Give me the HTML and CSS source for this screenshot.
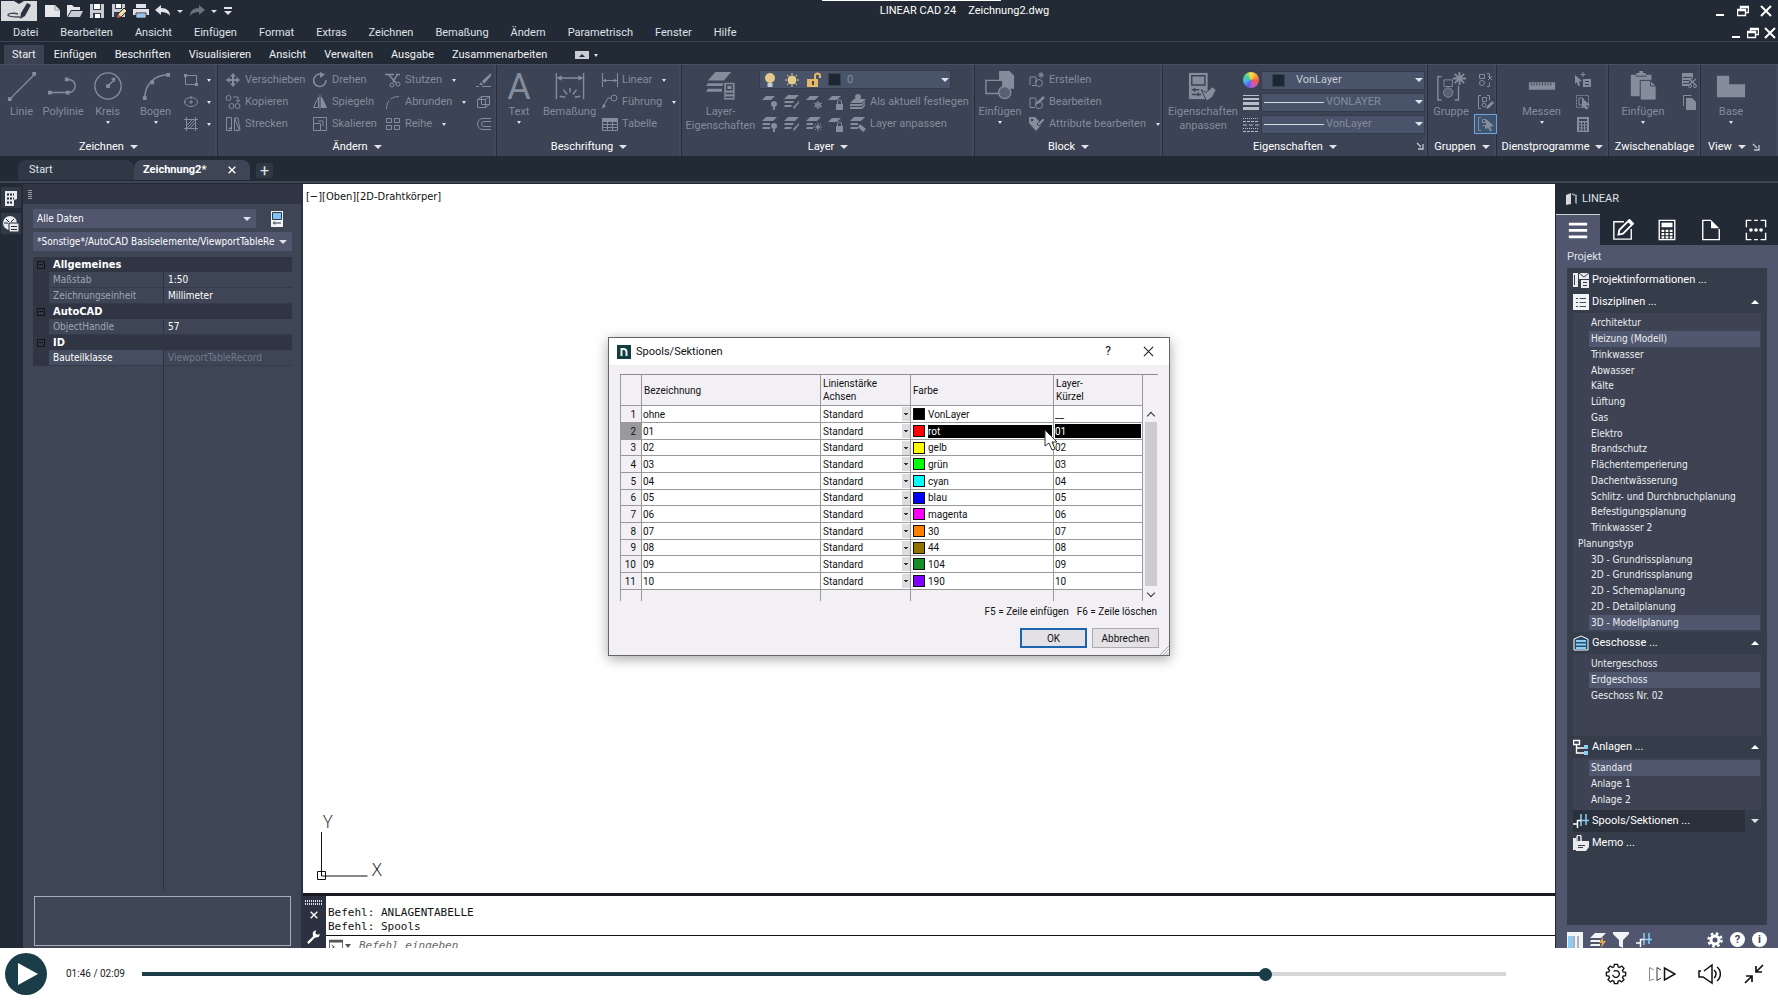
FILE: index.html
```
<!DOCTYPE html>
<html lang="de">
  <head>
    <meta charset="utf-8">
    <title>LINEAR CAD 24 - Zeichnung2.dwg</title>
    <link rel="stylesheet" href="styles.css">
  </head>
  <body>

    <!-- icon set -->
    <svg class="defs" aria-hidden="true">
      <symbol id="restore" viewBox="0 0 12 12"><path d="M3.500 4V1.500h8v6H9M.5 4.500h8v6h-8zM.5 5.500h8M4 2.500h7" fill="none" stroke="currentColor" stroke-width="1.400"/></symbol>
      <symbol id="close" viewBox="0 0 12 12"><path d="M1 1l10 10M11 1L1 11" fill="none" stroke="currentColor" stroke-width="2"/></symbol>
      <symbol id="min" viewBox="0 0 12 12"><path d="M2 9h8v2H2z" fill="currentColor"/></symbol>

      <symbol id="new" viewBox="0 0 16 16"><path d="M0 2h10l5 5v7H0z" fill="#e4e6ea"/><path d="M10 2v5h5" fill="none" stroke="#9298a4"/></symbol>
      <symbol id="open" viewBox="0 0 16 16"><path d="M0 14V2h5l2 2h6v3H4z" fill="#e4e6ea"/><path d="M4.500 8H16l-3 6H1z" fill="#c9ccd4"/></symbol>
      <symbol id="save" viewBox="0 0 16 16"><path d="M1 1h14v14H1z" fill="#c9ccd4"/><path d="M4 1h8v6H4zM4 10h8v5H4z" fill="#343b49"/><path d="M5 1h6v5H5zM6 11h5v4H6z" fill="#fff"/></symbol>
      <symbol id="saveas" viewBox="0 0 16 16"><path d="M1 1h13v13H1z" fill="#c9ccd4"/><path d="M4 1h7v5H4zM3 9h8v5H3z" fill="#343b49"/><path d="M5 1h5v4H5z" fill="#fff"/><path d="M6 15l1-4 6-6 3 3-6 6z" fill="#f1d9a8" stroke="#222a35"/><path d="M6 15l1-4 3 3z" fill="#d8584a"/></symbol>
      <symbol id="print" viewBox="0 0 16 16"><path d="M3 1h10v4H3zM0 6h16v6H0z" fill="#dfe1e6"/><path d="M3 5h10v1H3z" fill="#222a35"/><path d="M3 10h10v5H3z" fill="#fff" stroke="#222a35"/><path d="M4 11h8v3H4z" fill="#8fc6f2"/></symbol>
      <symbol id="undo" viewBox="0 0 16 16"><path d="M0 7l6-5v3c6 0 9 3 9 8-2-3-5-4-9-4v3z" fill="currentColor"/></symbol>
      <symbol id="redo" viewBox="0 0 16 16"><path d="M16 7l-6-5v3C4 5 1 8 1 13c2-3 5-4 9-4v3z" fill="currentColor"/></symbol>
      <symbol id="qmenu" viewBox="0 0 10 10"><path d="M1 1h8v2H1zM1 5h8L5 9z" fill="currentColor"/></symbol>

      <symbol id="line" viewBox="0 0 32 32"><path d="M3 30L29 4" stroke="currentColor" fill="none" stroke-width="1.500"/><path d="M1 28h4v4H1zM27 1h4v4h-4z" fill="currentColor"/></symbol>
      <symbol id="poly" viewBox="0 0 32 32"><path d="M2 23h18M20 9h2a7 7 0 010 14h-2" stroke="currentColor" fill="none" stroke-width="1.500"/><path d="M0 21h4v4H0zM18 7h4v4h-4zM19 21h4v4h-4z" fill="currentColor"/></symbol>
      <symbol id="circle" viewBox="0 0 32 32"><circle cx="16" cy="16" r="14" fill="none" stroke="currentColor" stroke-width="1.500"/><path d="M16 16l7-7" stroke="currentColor" stroke-width="1.500"/><path d="M14 14h4v4h-4zM24 7l-1 5-4-4z" fill="currentColor"/></symbol>
      <symbol id="arc" viewBox="0 0 32 32"><path d="M4 29C4 15 14 4 29 4" stroke="currentColor" fill="none" stroke-width="1.500"/><path d="M2 27h4v4H2zM10 10h4v4h-4zM27 2h4v4h-4z" fill="currentColor"/></symbol>
      <symbol id="rect" viewBox="0 0 16 16"><path d="M2.500 3.500h11v9h-11z" fill="none" stroke="currentColor"/><path d="M1 2h3v3H1zM12 11h3v3h-3z" fill="currentColor"/></symbol>
      <symbol id="ellipse" viewBox="0 0 16 16"><ellipse cx="8" cy="8" rx="6.500" ry="4.500" fill="none" stroke="currentColor"/><path d="M6 8h4M8 6v4M8 2v3M1 8h2" stroke="currentColor" fill="none"/></symbol>
      <symbol id="hatch" viewBox="0 0 16 16"><path d="M3.500 1v14M12.500 1v14M1 3.500h14M1 12.500h14M4 9l5-5M4 12l8-8M7 12l5-5" fill="none" stroke="currentColor"/></symbol>
      <symbol id="move" viewBox="0 0 16 16"><path d="M8 1l3 3.500H9V7h2.500V5L15 8l-3.500 3V9H9v2.500h2L8 15l-3-3.500h2V9H4.500v2L1 8l3.500-3v2H7V4.500H5z" fill="currentColor"/></symbol>
      <symbol id="rotate" viewBox="0 0 16 16"><path d="M10 2.500A6.200 6.200 0 1 0 14 8" fill="none" stroke="currentColor" stroke-width="1.500"/><path d="M8 0l5 2.500L8 6z" fill="currentColor"/></symbol>
      <symbol id="trim" viewBox="0 0 16 16"><path d="M0 2.500h9M11 2.500h4M4 3l7 8M12 3L8 10" fill="none" stroke="currentColor" stroke-width="1.500"/><circle cx="7" cy="13" r="2" fill="none" stroke="currentColor"/><circle cx="13" cy="12" r="2" fill="none" stroke="currentColor"/></symbol>
      <symbol id="copy" viewBox="0 0 16 16"><g fill="none" stroke="currentColor"><circle cx="3.500" cy="4" r="2.500"/><circle cx="6.500" cy="12" r="2.500"/><circle cx="12.500" cy="12" r="2.500"/><path d="M8 3h5v5M11 6l2 2 2-2"/></g></symbol>
      <symbol id="mirror" viewBox="0 0 16 16"><path d="M6.500 3v10.500h-5zM9.500 3v10.500h5z" fill="none" stroke="currentColor"/><path d="M9.500 3v10.500h5zM7.500 1h1v14h-1z" fill="currentColor"/></symbol>
      <symbol id="fillet" viewBox="0 0 16 16"><path d="M1.500 15C1.500 7 6 2.500 15 2.500" fill="none" stroke="currentColor" stroke-dasharray="9 2"/></symbol>
      <symbol id="stretch" viewBox="0 0 16 16"><path d="M1.500 1.500h5v13h-5zM9.500 2v12.500h5zM9 2h4l2 12" fill="none" stroke="currentColor"/><path d="M3 13l4-3v3z" fill="currentColor"/></symbol>
      <symbol id="scale" viewBox="0 0 16 16"><path d="M1.500 7V1.500h13v13H9M1.500 7.500h7v7h-7zM6 5h5v5" fill="none" stroke="currentColor"/></symbol>
      <symbol id="array" viewBox="0 0 16 16"><path d="M1.500 2.500h5v4h-5zM9.500 2.500h5v4h-5zM1.500 9.500h5v4h-5zM9.500 9.500h5v4h-5z" fill="none" stroke="currentColor"/></symbol>
      <symbol id="erase" viewBox="0 0 16 16"><path d="M15 1l-9 8 2 3 7-8zM5 10l-2 3 4 0z" fill="currentColor"/><path d="M0 14.500h3M6 14.500h9" stroke="currentColor"/></symbol>
      <symbol id="box3d" viewBox="0 0 16 16"><path d="M1.500 5.500h8v8h-8zM5.500 2.500h8v8h-8zM1.500 5.500l4-3M9.500 5.500l4-3M9.500 13.500l4-3" fill="none" stroke="currentColor"/></symbol>
      <symbol id="offset" viewBox="0 0 16 16"><path d="M15 2.500H7a5.500 5.500 0 000 11h8M15 5.500H8a2.500 2.500 0 000 5h7" fill="none" stroke="currentColor"/></symbol>

      <symbol id="dim" viewBox="0 0 32 32"><path d="M1.500 2v28M30.500 2v28M3 7.500h26M16 18v5M9 20l4 5M23 20l-4 5M5 27l6 1M27 27l-6 1" fill="none" stroke="currentColor" stroke-width="1.500"/><path d="M2 7.500l5-3v6zM30 7.500l-5-3v6z" fill="currentColor"/></symbol>
      <symbol id="linear" viewBox="0 0 16 16"><path d="M.5 1v14M15.500 1v14M1 8.500h14" fill="none" stroke="currentColor"/><path d="M1 8.500l3-2v4zM15 8.500l-3-2v4z" fill="currentColor"/></symbol>
      <symbol id="leader" viewBox="0 0 16 16"><circle cx="12" cy="4" r="3" fill="none" stroke="currentColor"/><path d="M9 4H6L1 13" fill="none" stroke="currentColor"/><path d="M0 15l1-5 3 2z" fill="currentColor"/></symbol>
      <symbol id="table" viewBox="0 0 16 16"><path d="M.5 2.500h15v12H.5zM.5 8.500h15M.5 11.500h15M5.500 5v9M10.500 5v9" fill="none" stroke="currentColor"/><path d="M0 2h16v4H0z" fill="currentColor"/></symbol>

      <symbol id="layers" viewBox="0 0 32 32"><path d="M10 1h17l-8 9H2zM5 13h-3l-2 3h17l3-3zM4 19H2l-2 3h17v-3z" fill="currentColor"/><path d="M19 12h12v19H19z" fill="currentColor" stroke="#3b4354"/><path d="M22 15h6v5h-6zM21 24h8M21 28h8" fill="none" stroke="#3b4354" stroke-width="1.500"/></symbol>
      <symbol id="lay1" viewBox="0 0 16 16"><path d="M4 2h9L9 6H0z" fill="currentColor"/><circle cx="12" cy="10" r="3" fill="currentColor"/><path d="M11 13h2v3h-2z" fill="currentColor"/></symbol>
      <symbol id="lay2" viewBox="0 0 16 16"><path d="M4 1h11l-4 4H0zM1 7h9l-1 2H0zM1 11h7l-1 2H0zM9 13l6-6v2l-5 6z" fill="currentColor"/></symbol>
      <symbol id="lay3" viewBox="0 0 16 16"><path d="M4 2h9L9 6H0z" fill="currentColor"/><path d="M12 7v8M8 9l8 4M16 9l-8 4" stroke="currentColor"/><circle cx="12" cy="11" r="2.500" fill="none" stroke="currentColor"/></symbol>
      <symbol id="lay4" viewBox="0 0 16 16"><path d="M4 2h9L9 6H0zM8 10h7v6H8z" fill="currentColor"/><path d="M9.500 10V8a2 2 0 014 0v2" fill="none" stroke="currentColor"/></symbol>
      <symbol id="lay5" viewBox="0 0 16 16"><path d="M4 5h12l-4 4H0zM0 10h12l3-3v2l-3 3H0zM0 13h12l3-3v2l-3 3H0z" fill="currentColor"/><circle cx="8" cy="3" r="3" fill="currentColor"/></symbol>
      <symbol id="lay6" viewBox="0 0 16 16"><path d="M4 1h11l-4 4H0zM1 7h7v2H0zM1 11h7v2H0zM10 8l6 5-3 3-5-5z" fill="currentColor"/></symbol>
      <symbol id="lay7" viewBox="0 0 16 16"><path d="M4 1h11l-4 4H0zM1 7h7v2H0zM1 11h7v2H0z" fill="currentColor"/><circle cx="12" cy="10" r="3" fill="currentColor"/><path d="M11 13h2v3h-2z" fill="currentColor"/></symbol>
      <symbol id="lay8" viewBox="0 0 16 16"><path d="M4 1h11l-4 4H0zM1 7h6v2H0zM1 11h6v2H0z" fill="currentColor"/><circle cx="12" cy="11" r="2" fill="currentColor"/><path d="M12 6.500v2M12 13.500v2M7.500 11h2M14.500 11h2M9 8l1 1M15 8l-1 1M9 14l1-1M15 14l-1-1" stroke="currentColor"/></symbol>
      <symbol id="bulb" viewBox="0 0 16 16"><circle cx="8" cy="6" r="5" fill="#e3c98a"/><path d="M5.500 11h5v4h-5z" fill="#c9cbd2"/></symbol>
      <symbol id="sun" viewBox="0 0 16 16"><circle cx="8" cy="8" r="4.500" fill="#e3c98a"/><path d="M8 1v2M8 13v2M1 8h2M13 8h2M3 3l1.500 1.500M11.500 11.500L13 13M13 3l-1.500 1.500M4.500 11.500L3 13" stroke="#e3c98a"/></symbol>
      <symbol id="unlock" viewBox="0 0 16 16"><path d="M1 7h11v8H1z" fill="#e3b968"/><path d="M9 7V4a2.500 2.500 0 015 0v2" fill="none" stroke="#e3b968" stroke-width="2"/><path d="M6 9h2v4H6z" fill="#4a4636"/></symbol>

      <symbol id="insert" viewBox="0 0 32 32"><path d="M15 0h11l5 5v14H15z" fill="currentColor"/><path d="M1 10h18v14H1z" fill="#3b4354" stroke="currentColor" stroke-width="1.500"/><circle cx="21" cy="23" r="6.500" fill="#596071" stroke="currentColor" stroke-width="1.500"/></symbol>
      <symbol id="blk" viewBox="0 0 16 16"><path d="M1 13V5h6M3 13.500h4M7 5v6" fill="none" stroke="currentColor"/><circle cx="10" cy="11" r="3.500" fill="none" stroke="currentColor"/><path d="M12 0v6M9 3h6M10 1l4 4M14 1l-4 4" stroke="currentColor"/></symbol>
      <symbol id="blkedit" viewBox="0 0 16 16"><path d="M1 13V4h6M1 13.500h5M7 5v6" fill="none" stroke="currentColor"/><circle cx="10" cy="11" r="3.500" fill="none" stroke="currentColor"/><path d="M7 9l7-7 2 2-7 6z" fill="currentColor"/></symbol>
      <symbol id="attr" viewBox="0 0 16 16"><path d="M0 1h6l7 7-6 7-7-8z" fill="currentColor"/><circle cx="3" cy="4" r="1.200" fill="#3b4354"/><path d="M8 8l6-6 2 2-6 6z" fill="currentColor" stroke="#3b4354"/></symbol>

      <symbol id="props" viewBox="0 0 32 32"><path d="M1 2h20v28H1z" fill="currentColor"/><path d="M4 5h14v10H4zM4 20h8M4 25h10M7 18v4M11 23v4" fill="none" stroke="#3b4354" stroke-width="1.500"/><path d="M14 20l5 3 7-6 4 3-4 8-6 4z" fill="currentColor" stroke="#3b4354"/></symbol>
      <symbol id="lw" viewBox="0 0 16 16"><path d="M0 1h16v1H0zM0 4h16v2H0zM0 8h16v3H0zM0 13h16v3H0z" fill="#b9bdc8"/></symbol>
      <symbol id="lt" viewBox="0 0 16 16"><path d="M0 2.500h16M0 12.500h16" stroke="#b9bdc8" stroke-dasharray="1 1"/><path d="M0 5.500h16M0 15.500h16" stroke="#b9bdc8" stroke-dasharray="3 1"/><path d="M0 9h16" stroke="#b9bdc8" stroke-dasharray="4 2"/></symbol>

      <symbol id="group" viewBox="0 0 32 32"><path d="M6 6H2v25h4M20 31h4V16" fill="none" stroke="currentColor" stroke-width="1.500"/><path d="M8.500 9.500h9v7h-9z" fill="none" stroke="currentColor"/><circle cx="13" cy="23" r="5" fill="#596071" stroke="currentColor"/><path d="M25 1v14M18 8h14M20 3l10 10M30 3L20 13" stroke="currentColor" stroke-width="2"/></symbol>
      <symbol id="ungroup" viewBox="0 0 16 16"><path d="M1.500 2.500h5v4h-5zM9 1.500h2.500v4M14 4l-4 4M10 4l4 4M9 14.500h2.500v-4" fill="none" stroke="currentColor"/><circle cx="4" cy="11" r="2.500" fill="none" stroke="currentColor"/></symbol>
      <symbol id="grpedit" viewBox="0 0 16 16"><path d="M3 1.500H.5v13H3M4.500 3.500h4v4h-4zM9 1.500h2.500v5" fill="none" stroke="currentColor"/><circle cx="6" cy="11" r="2" fill="none" stroke="currentColor"/><path d="M8 15l1-3 5-5 2 2-5 5z" fill="currentColor"/></symbol>
      <symbol id="grpsel" viewBox="0 0 16 16"><path d="M3 1.500H.5v13H3M4.500 3.500h3v3h-3zM4.500 9.500h3v3" fill="none" stroke="currentColor"/><path d="M8 3l8 7-4 .5 2 4-2 1-2-4-2 2z" fill="currentColor"/></symbol>

      <symbol id="ruler" viewBox="0 0 32 32"><path d="M2 12h28v8H2z" fill="currentColor"/><path d="M4 14h24" stroke="#3b4354" stroke-width="3" stroke-dasharray="1 2"/></symbol>
      <symbol id="idpoint" viewBox="0 0 16 16"><path d="M0 3l7 6-3 .5 1 4-2 .5-1-4-2 2zM8 7h8v8H8z" fill="currentColor"/><path d="M8 0v5M5.500 2.500h5" stroke="currentColor"/><path d="M10 9.500h4M10 12.500h4" stroke="#3b4354"/></symbol>
      <symbol id="selall" viewBox="0 0 16 16"><path d="M1.500 1.500h12v12h-12z" fill="none" stroke="currentColor" stroke-dasharray="2 1"/><path d="M4 4h4v7H4z" fill="none" stroke="currentColor"/><path d="M7 4l8 7-4 .5 2 3-2 1-2-3-2 2z" fill="currentColor"/></symbol>
      <symbol id="calc" viewBox="0 0 16 16"><path d="M2 1h12v15H2z" fill="currentColor"/><path d="M4 3h8v2H4z" fill="#3b4354"/><path d="M4 7.500h8M4 10.500h8M4 13.500h8" stroke="#3b4354" stroke-width="2" stroke-dasharray="2 1"/></symbol>
      <symbol id="paste" viewBox="0 0 32 32"><path d="M3 4h6V2h3V0h4v2h3v2h6v6H13v17H3z" fill="currentColor"/><path d="M8 5.500h12" stroke="#3b4354"/><path d="M13 10h11l6 6v15H13z" fill="currentColor" stroke="#3b4354"/><path d="M24 10v6h6" fill="none" stroke="#3b4354"/></symbol>
      <symbol id="cut" viewBox="0 0 16 16"><path d="M1 1h11v5l-4 3v5H1z" fill="currentColor"/><path d="M2 5.500h9M2 8.500h6M2 11.500h6" stroke="#3b4354"/><path d="M8 7l7 6M15 7l-7 6" stroke="currentColor" stroke-width="1.500"/><circle cx="9" cy="14" r="1.500" fill="none" stroke="currentColor"/><circle cx="14" cy="14" r="1.500" fill="none" stroke="currentColor"/></symbol>
      <symbol id="copyclip" viewBox="0 0 16 16"><path d="M2.500 12V1.500h8" fill="none" stroke="currentColor"/><path d="M5 4h6l4 4v8H5z" fill="currentColor"/></symbol>
      <symbol id="base" viewBox="0 0 32 32"><path d="M1 5h13v9h17v14H1z" fill="currentColor"/></symbol>
      <symbol id="corner" viewBox="0 0 8 8"><path d="M1 1l4 4M7 2v5H2" fill="none" stroke="#c3c7d0" stroke-width="1.300"/></symbol>

      <symbol id="rail1" viewBox="0 0 16 16"><path d="M2 1h12v8l-3 1v6H2z" fill="#e9eaee"/><path d="M4 4.500h7M4 8.500h7M4 12.500h5" stroke="#222a35" stroke-width="2" stroke-dasharray="2 1"/></symbol>
      <symbol id="rail2" viewBox="0 0 16 16"><path d="M7 0a7 7 0 017 7H7v7A7 7 0 017 0z" fill="#e9eaee"/><path d="M3 3l3 3M11 3L8 6M1 7h4" stroke="#222a35"/><path d="M6 7h10v9H6z" fill="#e9eaee" stroke="#222a35"/><path d="M8 10.500h6M8 13.500h6" stroke="#222a35"/></symbol>
      <symbol id="quick" viewBox="0 0 16 16"><path d="M2 0h12v16H2z" fill="#f2f3f5"/><path d="M3.500 1.500h9v7h-9z" fill="#7fc1f0" stroke="#303747"/><path d="M4 12h8M6 10.500L4.500 12 6 13.500" fill="none" stroke="#303747"/></symbol>
      <symbol id="wrench" viewBox="0 0 16 16"><path d="M1 15L9 7" stroke="#fff" stroke-width="2.500"/><path d="M14.500 4.500a4 4 0 11-4-4l-1 3 2 2z" fill="#fff"/></symbol>
      <symbol id="prompt" viewBox="0 0 16 16"><path d="M.5 1.500h15v14H.5z" fill="#fff" stroke="#555"/><path d="M0 1h16v3H0z" fill="#555"/><path d="M3 7l3 2-3 2M8 12h5" fill="none" stroke="#333"/></symbol>

      <symbol id="lin" viewBox="0 0 12 14"><path d="M0 3l5-2v11l-5 1z" fill="#d5d7dd"/><path d="M6 1l5 2v9l-2-1V4L6 3z" fill="#8f95a5"/></symbol>
      <symbol id="menu" viewBox="0 0 24 24"><path d="M2 4h20v3H2zM2 11h20v3H2zM2 18h20v3H2z" fill="#fff"/></symbol>
      <symbol id="edit" viewBox="0 0 24 24"><path d="M13 3H2v19h19V11" fill="none" stroke="#fff" stroke-width="1.500"/><path d="M7 17l1-5L19 1l4 4-11 11z" fill="none" stroke="#fff" stroke-width="2"/><path d="M17 3l4 4 2-2-4-4z" fill="#fff"/></symbol>
      <symbol id="calc2" viewBox="0 0 24 24"><path d="M3.500 1.500h17v21h-17z" fill="none" stroke="#fff" stroke-width="1.500"/><path d="M6 4h12v5H6z" fill="#fff"/><path d="M6 13h12M6 16.500h12M6 20h12" stroke="#fff" stroke-width="2.500" stroke-dasharray="3 1.500"/></symbol>
      <symbol id="page" viewBox="0 0 24 24"><path d="M12 1.500H3v21h18V11" fill="none" stroke="#fff" stroke-width="1.500"/><path d="M12 1l9 9h-9z" fill="#fff"/></symbol>
      <symbol id="more" viewBox="0 0 24 24"><path d="M7 1.500H1.500V9M17 1.500h5.500V9M7 22.500H1.500V15M17 22.500h5.500V15M10 1.500h4M10 22.500h4" fill="none" stroke="#fff" stroke-width="1.500"/><circle cx="6.500" cy="12" r="2" fill="#fff"/><circle cx="12" cy="12" r="2" fill="#fff"/><circle cx="17.500" cy="12" r="2" fill="#fff"/></symbol>
      <symbol id="t-info" viewBox="0 0 16 16"><path d="M0 1h5v14H0z" fill="#e9eaee"/><path d="M6 1h10v6H6zM8 8h8v8H8z" fill="#e9eaee"/><path d="M1.500 3v10M6 1l5 4 5-4M10 10.500h4M10 13.500h4" stroke="#353c4a" fill="none"/></symbol>
      <symbol id="t-list" viewBox="0 0 16 16"><path d="M0 0h16v16H0z" fill="#f2f3f5"/><path d="M3 4.500h2M6.500 4.500H13M3 8.500h2M6.500 8.500H13M3 12.500h2M6.500 12.500H13" stroke="#2c5560" stroke-width="1.200"/></symbol>
      <symbol id="t-floor" viewBox="0 0 16 16"><path d="M1 15V4l7-3 7 3v11z" fill="#274a66" stroke="#fff"/><path d="M3 6h10M3 9.500h10M3 13h10" stroke="#8ccdf6" stroke-width="2"/></symbol>
      <symbol id="t-tree" viewBox="0 0 16 16"><path d="M.5 1.500h6v4h-6zM3.500 6v8H11M3.500 9H11" fill="none" stroke="#fff" stroke-width="1.400"/><path d="M11 6h4v4h-4zM11 12h4v4h-4z" fill="#8ccdf6"/></symbol>
      <symbol id="t-spool" viewBox="0 0 16 16"><path d="M0 11h4M4.500 7v8" stroke="#fff" stroke-width="1.500" fill="none"/><path d="M8 7.500h8M8 1v12M13 1v11" stroke="#8ccdf6" stroke-width="1.500" fill="none"/><path d="M4 7.500h4" stroke="#fff" stroke-width="1.500"/></symbol>
      <symbol id="t-memo" viewBox="0 0 16 16"><path d="M0 3h3v12H0zM3 6h13v6l-3 4H3z" fill="#e9eaee"/><path d="M4 6V2a2 2 0 014 0v6" fill="none" stroke="#fff" stroke-width="1.300"/><path d="M5 10.500h7M5 12.500h5" stroke="#353c4a"/></symbol>
      <symbol id="f-win" viewBox="0 0 16 16"><path d="M0 0h16v16H0z" fill="#f2f3f5"/><path d="M1 4h5v12H1z" fill="#8ccdf6"/><path d="M7 4v12M11 4v12" stroke="#6a7086"/></symbol>
      <symbol id="f-lay" viewBox="0 0 16 16"><path d="M5 1h11l-5 5H0zM1 8h9v2H0zM1 12h9v2H0z" fill="#f2f3f5"/><path d="M13 5l-4 6h3l-1 5 5-7h-3z" fill="#e6a64c"/></symbol>
      <symbol id="f-fil" viewBox="0 0 16 16"><path d="M0 0h16v2l-6 6v8l-4-2V8L0 2z" fill="#f2f3f5"/></symbol>
      <symbol id="f-gear" viewBox="0 0 16 16"><circle cx="8" cy="8" r="4" fill="none" stroke="#fff" stroke-width="3"/><circle cx="8" cy="8" r="6.500" fill="none" stroke="#fff" stroke-width="2.500" stroke-dasharray="2.600 2.500"/></symbol>

      <symbol id="p-gear" viewBox="0 0 24 24"><path d="M10.200 2.500h3.600l.5 2.700 1.600.7 2.300-1.600 2.500 2.500-1.600 2.300.7 1.600 2.700.5v3.600l-2.700.5-.7 1.600 1.600 2.300-2.500 2.500-2.300-1.600-1.600.7-.5 2.700h-3.600l-.5-2.700-1.600-.7-2.300 1.600-2.500-2.500 1.600-2.300-.7-1.600L1.500 14.800v-3.600l2.700-.5.700-1.600-1.600-2.300 2.500-2.500 2.300 1.600 1.600-.7z" transform="translate(0 -1)" fill="none" stroke="#111" stroke-width="1.500"/><path d="M9.500 9.200A3.700 3.700 0 1 1 8.400 13" fill="none" stroke="#111" stroke-width="1.500"/></symbol>
      <symbol id="p-ff" viewBox="0 0 28 14"><path d="M6 12L1.500 13.500V.5L6 3" fill="none" stroke="#888"/><path d="M13 11l-4 2.500V.5L13 3" fill="none" stroke="#333"/><path d="M16.500 1v12L27 7z" fill="none" stroke="#111" stroke-width="1.500"/></symbol>
      <symbol id="p-vol" viewBox="0 0 26 22"><path d="M4 8H2v6h4l9 6V2L7 8" fill="none" stroke="#111" stroke-width="1.500"/><path d="M17 7a5 5 0 010 8M20 4a9 9 0 010 14" fill="none" stroke="#111" stroke-width="1.500"/></symbol>
      <symbol id="p-min" viewBox="0 0 20 20"><path d="M19 1l-7 7M12 2v6h6M1 19l7-7M2 12h6v6" fill="none" stroke="#111" stroke-width="1.700"/></symbol>
    </svg>

    <div class="app">
      <header class="titlebar">
        <div class="screen-edge"></div>
        <div class="quick">
          <button class="logo" aria-label="Anwendung">
            <svg viewBox="0 0 36 20"><path d="M0 0h36v20H0z" fill="#d9dade"/><path d="M17 13c-3-1-10-1-10 1s8 2 12 2" fill="none" stroke="#444b58" stroke-width="1.500"/><path d="M26 2l4 2-6 11-5 3 1-6z" fill="#2c3340"/><path d="M13 0h10l-5 3z" fill="#222a35"/></svg>
          </button>
          <button aria-label="Neu"><svg class="i16"><use href="#new"/></svg></button>
          <button aria-label="Öffnen"><svg class="i16"><use href="#open"/></svg></button>
          <button aria-label="Speichern"><svg class="i16"><use href="#save"/></svg></button>
          <button aria-label="Speichern unter"><svg class="i16"><use href="#saveas"/></svg></button>
          <button aria-label="Drucken"><svg class="i16"><use href="#print"/></svg></button>
          <button aria-label="Rückgängig"><svg class="i16"><use href="#undo"/></svg></button>
          <i class="caret"></i>
          <button class="off" aria-label="Wiederholen"><svg class="i16"><use href="#redo"/></svg></button>
          <i class="caret"></i>
          <button aria-label="Anpassen"><svg class="i10"><use href="#qmenu"/></svg></button>
        </div>
        <div class="title"><span>LINEAR CAD 24</span><span>Zeichnung2.dwg</span></div>
        <div class="winbtns">
          <button aria-label="Minimieren"><svg class="i12"><use href="#min"/></svg></button>
          <button aria-label="Verkleinern"><svg class="i12"><use href="#restore"/></svg></button>
          <button aria-label="Schließen"><svg class="i12"><use href="#close"/></svg></button>
        </div>
      </header>

      <nav class="menubar">
        <a href="#">Datei</a><a href="#">Bearbeiten</a><a href="#">Ansicht</a><a href="#">Einfügen</a><a href="#">Format</a><a href="#">Extras</a><a href="#">Zeichnen</a><a href="#">Bemaßung</a><a href="#">Ändern</a><a href="#">Parametrisch</a><a href="#">Fenster</a><a href="#">Hilfe</a>
        <div class="winbtns tight">
          <button aria-label="Zeichnung minimieren"><svg class="i12"><use href="#min"/></svg></button>
          <button aria-label="Zeichnung verkleinern"><svg class="i12"><use href="#restore"/></svg></button>
          <button aria-label="Zeichnung schließen"><svg class="i12"><use href="#close"/></svg></button>
        </div>
      </nav>

      <nav class="tabs">
        <a class="active" href="#">Start</a><a href="#">Einfügen</a><a href="#">Beschriften</a><a href="#">Visualisieren</a><a href="#">Ansicht</a><a href="#">Verwalten</a><a href="#">Ausgabe</a><a href="#">Zusammenarbeiten</a>
        <button class="collapse" aria-label="Multifunktionsleiste"><span><i class="tri up"></i></span><i class="caret"></i></button>
      </nav>

      <div class="ribbon">
        <section class="panel">
          <div class="tools draw">
            <button class="big"><svg class="i30"><use href="#line"/></svg>Linie</button>
            <button class="big"><svg class="i30"><use href="#poly"/></svg>Polylinie</button>
            <button class="big"><svg class="i30"><use href="#circle"/></svg>Kreis<i class="caret"></i></button>
            <button class="big"><svg class="i30"><use href="#arc"/></svg>Bogen<i class="caret"></i></button>
            <div class="stack">
              <button class="small" aria-label="Rechteck"><svg class="i16"><use href="#rect"/></svg><i class="caret"></i></button>
              <button class="small" aria-label="Ellipse"><svg class="i16"><use href="#ellipse"/></svg><i class="caret"></i></button>
              <button class="small" aria-label="Schraffur"><svg class="i16"><use href="#hatch"/></svg><i class="caret"></i></button>
            </div>
          </div>
          <h2>Zeichnen <i class="tri"></i></h2>
        </section>

        <section class="panel">
          <div class="tools modify">
            <div class="stack">
              <button class="small"><svg class="i16"><use href="#move"/></svg>Verschieben</button>
              <button class="small"><svg class="i16"><use href="#copy"/></svg>Kopieren</button>
              <button class="small"><svg class="i16"><use href="#stretch"/></svg>Strecken</button>
            </div>
            <div class="stack">
              <button class="small"><svg class="i16"><use href="#rotate"/></svg>Drehen</button>
              <button class="small"><svg class="i16"><use href="#mirror"/></svg>Spiegeln</button>
              <button class="small"><svg class="i16"><use href="#scale"/></svg>Skalieren</button>
            </div>
            <div class="stack">
              <button class="small"><svg class="i16"><use href="#trim"/></svg>Stutzen<i class="caret"></i></button>
              <button class="small"><svg class="i16"><use href="#fillet"/></svg>Abrunden<i class="caret"></i></button>
              <button class="small"><svg class="i16"><use href="#array"/></svg>Reihe<i class="caret"></i></button>
            </div>
            <div class="stack">
              <button class="small" aria-label="Löschen"><svg class="i16"><use href="#erase"/></svg></button>
              <button class="small" aria-label="Ursprung"><svg class="i16"><use href="#box3d"/></svg></button>
              <button class="small" aria-label="Versetzen"><svg class="i16"><use href="#offset"/></svg></button>
            </div>
          </div>
          <h2>Ändern <i class="tri"></i></h2>
        </section>

        <section class="panel">
          <div class="tools annotate">
            <button class="big"><span class="bigA">A</span>Text<i class="caret"></i></button>
            <button class="big"><svg class="i30"><use href="#dim"/></svg>Bemaßung</button>
            <div class="stack">
              <button class="small"><svg class="i16"><use href="#linear"/></svg>Linear<i class="caret"></i></button>
              <button class="small"><svg class="i16"><use href="#leader"/></svg>Führung<i class="caret"></i></button>
              <button class="small"><svg class="i16"><use href="#table"/></svg>Tabelle</button>
            </div>
          </div>
          <h2>Beschriftung <i class="tri"></i></h2>
        </section>

        <section class="panel">
          <div class="tools layer">
            <button class="big"><svg class="i30"><use href="#layers"/></svg>Layer-<br>Eigenschaften</button>
            <div class="stack">
              <div class="combo layercombo">
                <svg class="i16"><use href="#bulb"/></svg><svg class="i16"><use href="#sun"/></svg><svg class="i16"><use href="#unlock"/></svg><span class="chip"></span>
                <select aria-label="Layer"><option>0</option></select><i class="tri"></i>
              </div>
              <div class="iconrow">
                <svg class="i16"><use href="#lay1"/></svg><svg class="i16"><use href="#lay2"/></svg><svg class="i16"><use href="#lay3"/></svg><svg class="i16"><use href="#lay4"/></svg>
                <button class="small"><svg class="i16"><use href="#lay5"/></svg>Als aktuell festlegen</button>
              </div>
              <div class="iconrow">
                <svg class="i16"><use href="#lay7"/></svg><svg class="i16"><use href="#lay2"/></svg><svg class="i16"><use href="#lay8"/></svg><svg class="i16"><use href="#lay4"/></svg>
                <button class="small"><svg class="i16"><use href="#lay6"/></svg>Layer anpassen</button>
              </div>
            </div>
          </div>
          <h2>Layer <i class="tri"></i></h2>
        </section>

        <section class="panel">
          <div class="tools block">
            <button class="big"><svg class="i30"><use href="#insert"/></svg>Einfügen<i class="caret"></i></button>
            <div class="stack">
              <button class="small"><svg class="i16"><use href="#blk"/></svg>Erstellen</button>
              <button class="small"><svg class="i16"><use href="#blkedit"/></svg>Bearbeiten</button>
              <button class="small"><svg class="i16"><use href="#attr"/></svg>Attribute bearbeiten<i class="caret"></i></button>
            </div>
          </div>
          <h2>Block <i class="tri"></i></h2>
        </section>

        <section class="panel">
          <div class="tools props">
            <button class="big"><svg class="i30"><use href="#props"/></svg>Eigenschaften<br>anpassen</button>
            <div class="stack">
              <div class="prop"><span class="wheel"></span><div class="combo bright"><span class="chip"></span><select aria-label="Farbe"><option>VonLayer</option></select><i class="tri"></i></div></div>
              <div class="prop"><svg class="i16"><use href="#lw"/></svg><div class="combo"><span class="rule"></span><select aria-label="Linienstärke"><option>VONLAYER</option></select><i class="tri"></i></div></div>
              <div class="prop"><svg class="i16"><use href="#lt"/></svg><div class="combo"><span class="rule"></span><select aria-label="Linientyp"><option>VonLayer</option></select><i class="tri"></i></div></div>
            </div>
          </div>
          <h2>Eigenschaften <i class="tri"></i></h2>
          <svg class="launch"><use href="#corner"/></svg>
        </section>

        <section class="panel">
          <div class="tools groups">
            <button class="big"><svg class="i30"><use href="#group"/></svg>Gruppe</button>
            <div class="stack">
              <button class="small" aria-label="Gruppierung aufheben"><svg class="i16"><use href="#ungroup"/></svg></button>
              <button class="small" aria-label="Gruppe bearbeiten"><svg class="i16"><use href="#grpedit"/></svg></button>
              <button class="small on" aria-label="Gruppenauswahl"><svg class="i16"><use href="#grpsel"/></svg></button>
            </div>
          </div>
          <h2>Gruppen <i class="tri"></i></h2>
        </section>

        <section class="panel">
          <div class="tools utils">
            <button class="big"><svg class="i30"><use href="#ruler"/></svg>Messen<i class="caret"></i></button>
            <div class="stack">
              <button class="small" aria-label="Punktposition"><svg class="i16"><use href="#idpoint"/></svg></button>
              <button class="small" aria-label="Alles wählen"><svg class="i16"><use href="#selall"/></svg></button>
              <button class="small" aria-label="Rechner"><svg class="i16"><use href="#calc"/></svg></button>
            </div>
          </div>
          <h2>Dienstprogramme <i class="tri"></i></h2>
        </section>

        <section class="panel">
          <div class="tools clip">
            <button class="big"><svg class="i30"><use href="#paste"/></svg>Einfügen<i class="caret"></i></button>
            <div class="stack">
              <button class="small" aria-label="Ausschneiden"><svg class="i16"><use href="#cut"/></svg></button>
              <button class="small" aria-label="Kopieren"><svg class="i16"><use href="#copyclip"/></svg></button>
            </div>
          </div>
          <h2>Zwischenablage</h2>
        </section>

        <section class="panel">
          <div class="tools view">
            <button class="big"><svg class="i30"><use href="#base"/></svg>Base<i class="caret"></i></button>
          </div>
          <h2 class="start">View <i class="tri"></i> <svg class="i8"><use href="#corner"/></svg></h2>
        </section>
      </div>

      <nav class="filetabs">
        <a href="#">Start</a>
        <a class="active" href="#">Zeichnung2* <svg class="i8"><use href="#close"/></svg></a>
        <button aria-label="Neue Zeichnung">+</button>
      </nav>

      <div class="workspace">
        <aside class="rail">
          <button aria-label="Eigenschaften"><svg class="i16"><use href="#rail1"/></svg></button>
          <button aria-label="Werkzeuge"><svg class="i16"><use href="#rail2"/></svg></button>
        </aside>

        <aside class="palette">
          <div class="palette-head"><span class="grip"></span></div>
          <div class="palette-body">
            <div class="pickrow">
              <div class="pick"><select aria-label="Daten"><option>Alle Daten</option></select><i class="tri"></i></div>
              <button aria-label="Schnellauswahl"><svg class="i16"><use href="#quick"/></svg></button>
            </div>
            <div class="pick"><select aria-label="Element"><option>*Sonstige*/AutoCAD Basiselemente/ViewportTableRe</option></select><i class="tri"></i></div>
            <table class="properties">
              <colgroup><col class="c-fold"><col class="c-label"><col></colgroup>
              <tr class="group"><td><i class="fold"></i></td><th colspan="2">Allgemeines</th></tr>
              <tr><td></td><th>Maßstab</th><td>1:50</td></tr>
              <tr><td></td><th>Zeichnungseinheit</th><td>Millimeter</td></tr>
              <tr class="group"><td><i class="fold"></i></td><th colspan="2">AutoCAD</th></tr>
              <tr><td></td><th>ObjectHandle</th><td>57</td></tr>
              <tr class="group"><td><i class="fold"></i></td><th colspan="2">ID</th></tr>
              <tr class="readonly"><td></td><th>Bauteilklasse</th><td>ViewportTableRecord</td></tr>
            </table>
            <div class="empty"></div>
            <div class="hint"></div>
          </div>
        </aside>

        <main class="drawing">
          <div class="canvas">
            <div class="viewlabel">[−][Oben][2D-Drahtkörper]</div>
            <svg class="ucs" viewBox="0 0 90 90">
              <path d="M6.500 33v44h46M2.500 72.500h8v8h-8z" fill="none" stroke="#111"/>
              <text x="8" y="29">Y</text><text x="57" y="77">X</text>
            </svg>
          </div>
          <div class="command">
            <div class="cmdbar">
              <span class="dots"></span>
              <button aria-label="Schließen"><svg class="i8"><use href="#close"/></svg></button>
              <button aria-label="Anpassen"><svg class="i14"><use href="#wrench"/></svg></button>
            </div>
            <div class="cmdlog">
              <div class="history">Befehl: ANLAGENTABELLE<br>Befehl: Spools</div>
              <div class="cmdline"><svg class="i14"><use href="#prompt"/></svg><i class="tri"></i><input type="text" aria-label="Befehl" placeholder="Befehl eingeben"></div>
            </div>
          </div>
        </main>

        <aside class="linear">
          <div class="linear-head"><svg class="i14"><use href="#lin"/></svg>LINEAR</div>
          <nav class="linear-tabs">
            <a class="active" href="#" aria-label="Projekt"><svg class="i22"><use href="#menu"/></svg></a>
            <a href="#" aria-label="Zeichnen"><svg class="i22"><use href="#edit"/></svg></a>
            <a href="#" aria-label="Berechnen"><svg class="i22"><use href="#calc2"/></svg></a>
            <a href="#" aria-label="Dokument"><svg class="i22"><use href="#page"/></svg></a>
            <a href="#" aria-label="Weitere"><svg class="i22"><use href="#more"/></svg></a>
          </nav>
          <div class="linear-body">
            <h3>Projekt</h3>
            <div class="tree">
              <div class="node"><svg class="i16"><use href="#t-info"/></svg>Projektinformationen ...</div>
              <div class="node"><svg class="i16"><use href="#t-list"/></svg>Disziplinen ...<i class="tri up"></i></div>
              <ul>
                <li>Architektur</li>
                <li class="sel">Heizung (Modell)</li>
                <li>Trinkwasser</li>
                <li>Abwasser</li>
                <li>Kälte</li>
                <li>Lüftung</li>
                <li>Gas</li>
                <li>Elektro</li>
                <li>Brandschutz</li>
                <li>Flächentemperierung</li>
                <li>Dachentwässerung</li>
                <li>Schlitz- und Durchbruchplanung</li>
                <li>Befestigungsplanung</li>
                <li>Trinkwasser 2</li>
                <li class="type">Planungstyp</li>
                <li>3D - Grundrissplanung</li>
                <li>2D - Grundrissplanung</li>
                <li>2D - Schemaplanung</li>
                <li>2D - Detailplanung</li>
                <li class="sel">3D - Modellplanung</li>
              </ul>
              <div class="node"><svg class="i16"><use href="#t-floor"/></svg>Geschosse ...<i class="tri up"></i></div>
              <ul class="floors">
                <li>Untergeschoss</li>
                <li class="sel">Erdgeschoss</li>
                <li>Geschoss Nr. 02</li>
              </ul>
              <div class="node"><svg class="i16"><use href="#t-tree"/></svg>Anlagen ...<i class="tri up"></i></div>
              <ul>
                <li class="sel">Standard</li>
                <li>Anlage 1</li>
                <li>Anlage 2</li>
              </ul>
              <div class="node current"><svg class="i16"><use href="#t-spool"/></svg>Spools/Sektionen ...<i class="tri"></i></div>
              <div class="node"><svg class="i16"><use href="#t-memo"/></svg>Memo ...</div>
            </div>
            <div class="linear-foot">
              <svg class="i16"><use href="#f-win"/></svg><svg class="i16"><use href="#f-lay"/></svg><svg class="i16"><use href="#f-fil"/></svg><svg class="i16"><use href="#t-spool"/></svg>
              <span class="spacer"></span>
              <svg class="i16"><use href="#f-gear"/></svg><b>?</b><b>i</b>
            </div>
          </div>
        </aside>
      </div>

      <footer class="player">
        <button class="play" aria-label="Abspielen"><svg viewBox="0 0 42 42"><circle cx="21" cy="21" r="21" fill="#1b3d47"/><path d="M13 10l20 11-20 11z" fill="#fff"/></svg></button>
        <span class="time">01:46 / 02:09</span>
        <input type="range" min="0" max="129" step="any" value="106.7" aria-label="Position">
        <div class="controls">
          <button aria-label="Einstellungen"><svg width="22" height="22"><use href="#p-gear"/></svg></button>
          <button aria-label="Geschwindigkeit"><svg width="28" height="14"><use href="#p-ff"/></svg></button>
          <button aria-label="Lautstärke"><svg width="26" height="22"><use href="#p-vol"/></svg></button>
          <button aria-label="Vollbild beenden"><svg width="20" height="20"><use href="#p-min"/></svg></button>
        </div>
      </footer>

      <div class="dialog" role="dialog" aria-label="Spools/Sektionen">
        <div class="dialog-title">
          <svg class="i14" viewBox="0 0 14 14"><path d="M0 0h14v14H0z" fill="#123c40"/><path d="M4.500 11V4h2c2 0 3 1 3 3v4" fill="none" stroke="#e8f4f4" stroke-width="2"/></svg>
          <span>Spools/Sektionen</span>
          <button aria-label="Hilfe">?</button>
          <button aria-label="Schließen"><svg width="11" height="11" viewBox="0 0 12 12"><path d="M1 1l10 10M11 1L1 11" fill="none" stroke="#222" stroke-width="1.200"/></svg></button>
        </div>
        <div class="grid">
          <table class="spools">
            <colgroup><col class="c-no"><col><col class="c-width"><col class="c-color"><col class="c-short"></colgroup>
            <thead><tr><th></th><th>Bezeichnung</th><th>Linienstärke<br>Achsen</th><th>Farbe</th><th>Layer-<br>Kürzel</th></tr></thead>
            <tbody id="rows"></tbody>
          </table>
          <div class="scroll"><i class="chev"></i><span></span><i class="chev down"></i></div>
        </div>
        <div class="keys"><span>F5 = Zeile einfügen</span><span>F6 = Zeile löschen</span></div>
        <div class="buttons"><button class="default">OK</button><button>Abbrechen</button></div>
        <svg class="resize" viewBox="0 0 12 12"><path d="M1 12L12 1M5 12l7-7M9 12l3-3" stroke="#999"/></svg>
        <svg class="pointer" viewBox="0 0 16 22"><path d="M1 1v16l4-3 3 7 3-1-3-7h5z" fill="#fff" stroke="#333"/></svg>
      </div>
    </div>

    <script>
      var spools = [
        ['ohne', '#000000', 'VonLayer', '__'],
        ['01', '#ff0000', 'rot', '01'],
        ['02', '#ffff00', 'gelb', '02'],
        ['03', '#00ff00', 'grün', '03'],
        ['04', '#00ffff', 'cyan', '04'],
        ['05', '#0000ff', 'blau', '05'],
        ['06', '#ff00ff', 'magenta', '06'],
        ['07', '#ff7f00', '30', '07'],
        ['08', '#937200', '44', '08'],
        ['09', '#139126', '104', '09'],
        ['10', '#7f00ff', '190', '10']
      ];
      var html = '';
      spools.forEach(function(s, i) {
        html += '<tr' + (i == 1 ? ' class="sel"' : '') + '><th>' + (i + 1) + '</th><td>' + s[0] + '</td>' +
          '<td class="lw"><div><select aria-label="Linienstärke ' + (i + 1) + '"><option>Standard</option></select><i class="caret"></i></div></td>' +
          '<td class="color"><div><span class="swatch" style="background:' + s[1] + '"></span><span class="name">' + s[2] + '</span></div></td>' +
          '<td class="short"><div>' + s[3] + '</div></td></tr>';
      });
      html += '<tr class="rest"><th></th><td></td><td></td><td></td><td></td></tr>';
      document.getElementById('rows').innerHTML = html;
    </script>
  </body>
</html>
```
FILE: styles.css
```
* {
  box-sizing: border-box;
}

body {
  margin: 0;
  background: #222a35;
  color: #dfe2e8;
  font: 11px/14px Roboto, "Open Sans", sans-serif;
}

a {
  color: inherit;
  text-decoration: none;
}

button, select, input {
  font: inherit;
  color: inherit;
  background: none;
  border: 0;
  padding: 0;
  margin: 0;
}

select {
  appearance: none;
  outline: 0;
  min-width: 0;
}

svg {
  display: block;
  flex: none;
}

.defs {
  position: absolute;
  width: 0;
  height: 0;
}

.i8 { width: 8px; height: 8px; }
.i10 { width: 10px; height: 10px; }
.i12 { width: 12px; height: 12px; }
.i14 { width: 14px; height: 14px; }
.i16 { width: 16px; height: 16px; }
.i22 { width: 22px; height: 22px; }
.i30 { width: 30px; height: 30px; }

/* small drop-down arrows */
.caret, .tri {
  flex: none;
  width: 0;
  height: 0;
  border: 2px solid transparent;
  border-top: 3px solid #dfe2e8;
  border-bottom: 0;
}

.tri {
  border-width: 4px 4px 0;
}

.tri.up {
  border-width: 0 4px 4px;
  border-bottom: 4px solid #fff;
}

.app {
  position: relative;
  display: flex;
  flex-direction: column;
  height: 100vh;
  overflow: hidden;
}

/* title and menus */
.titlebar {
  position: relative;
  display: flex;
  align-items: center;
  justify-content: space-between;
  height: 22px;
}

.screen-edge {
  position: absolute;
  top: 0;
  left: 822px;
  width: 179px;
  height: 1px;
  background: #fff;
}

.quick {
  display: flex;
  align-items: center;
  gap: 6px;
  flex: 1;
  padding-left: 1px;
}

.quick .logo svg {
  width: 36px;
  height: 20px;
}

.quick .logo {
  margin-right: 2px;
}

.quick .caret {
  border-width: 3px 3px 0;
}

.quick .off {
  color: #69707e;
}

.title {
  display: flex;
  gap: 12px;
  margin-left: 156px;
  color: #fff;
}

.winbtns {
  display: flex;
  justify-content: flex-end;
  gap: 11px;
  flex: 1;
  padding-right: 6px;
  color: #fff;
}

.winbtns.tight {
  gap: 5px;
  padding-right: 2px;
}

.menubar {
  display: flex;
  align-items: center;
  gap: 22px;
  height: 20px;
  padding: 2px 0 0 13px;
  border-bottom: 1px solid #3c4351;
}

.tabs {
  display: flex;
  align-items: stretch;
  height: 22px;
  padding-left: 4px;
  color: #f0f1f4;
}

.tabs a {
  padding: 6px 9px 0;
}

.tabs a.active {
  background: #3b4354;
  margin: 3px 1px 0 0;
  padding: 3px 8px 0;
}

.collapse {
  display: flex;
  align-items: center;
  gap: 5px;
  margin: 4px 0 0 19px;
}

.collapse span {
  display: grid;
  place-items: center;
  width: 14px;
  height: 8px;
  background: #c9ccd4;
}

.collapse .tri {
  border-width: 0 3px 3px;
  border-bottom-color: #222a35;
}

/* ribbon */
.ribbon {
  display: grid;
  grid-template-columns: 218px 279px 185px 293px 188px 265px 69px 112px 92px 1fr;
  height: 92px;
  background: #3b4354;
  border-top: 1px solid #465063;
  color: #858c9b;
}

.panel {
  position: relative;
  display: flex;
  flex-direction: column;
  padding-top: 4px;
  border-right: 1px solid #262e3a;
  box-shadow: inset -2px 0 #414a5c;
}

.panel:last-child {
  border: 0;
}

.panel h2 {
  display: flex;
  align-items: center;
  justify-content: center;
  gap: 6px;
  margin: 0;
  padding-top: 1px;
  font-size: 11px;
  font-weight: 400;
  color: #fff;
  white-space: nowrap;
}

.panel h2.start {
  justify-content: flex-start;
  padding-left: 7px;
}

.launch {
  position: absolute;
  right: 3px;
  bottom: 6px;
  width: 8px;
  height: 8px;
}

.tools {
  display: grid;
  height: 70px;
}

.draw { grid-template-columns: 43px 40px 49px 47px 1fr; }
.modify { grid-template-columns: 87px 73px 91px 1fr; padding-left: 7px; }
.annotate { grid-template-columns: 44px 57px 1fr; }
.layer { grid-template-columns: 77px 1fr; }
.block { grid-template-columns: 50px 1fr; }
.props { grid-template-columns: 80px 1fr; }
.groups { grid-template-columns: 46px 1fr; }
.utils { grid-template-columns: 59px 1fr; padding-left: 15px; }
.clip { grid-template-columns: 68px 1fr; }
.view { grid-template-columns: 60px; }

.big {
  display: flex;
  flex-direction: column;
  align-items: center;
  justify-content: flex-start;
  padding-top: 2px;
  white-space: nowrap;
}

.big svg, .bigA {
  margin-bottom: 4px;
}

.bigA {
  height: 30px;
  font-size: 36px;
  line-height: 32px;
}

.big .caret {
  margin-top: 2px;
}

.stack {
  display: grid;
  grid-auto-rows: 22px;
  padding-left: 4px;
}

.small {
  display: flex;
  align-items: center;
  gap: 4px;
  white-space: nowrap;
}

.small .caret {
  margin-left: 6px;
}

.draw .small .caret {
  margin-left: 4px;
}

.modify .stack, .layer .stack, .props .stack {
  padding-left: 0;
}

.small.on {
  justify-content: center;
  width: 23px;
  margin: 1px 0 1px -4px;
  border: 1px solid #6fa5d6;
  background: #3c5470;
}

.combo {
  display: flex;
  align-items: center;
  gap: 6px;
  height: 19px;
  flex: 1;
  padding: 0 1px 0 2px;
  background: #49536a;
  border: 1px solid #343c4b;
}

.combo select {
  flex: 1;
  width: 20px;
}

.layercombo {
  flex: none;
  margin: 1px 23px 2px 0;
}

.bright {
  color: #c6cad3;
}

.bright .chip {
  margin: 0 5px 0 8px;
}

.chip {
  width: 13px;
  height: 13px;
  background: #1f2633;
  border: 1px solid #39404e;
}

.rule {
  width: 60px;
  height: 1px;
  margin-right: -4px;
  background: #d5d8de;
}

.iconrow {
  display: flex;
  align-items: center;
  gap: 6px;
  padding-left: 3px;
}

.prop {
  display: flex;
  align-items: center;
  gap: 2px;
  padding-right: 2px;
}

.wheel {
  width: 16px;
  height: 16px;
  border-radius: 50%;
  background: conic-gradient(#f9e04c, #f7a43c 50deg, #f0584c 100deg, #c85ad0 160deg, #5a62e0 210deg, #48b8f0 260deg, #46d08a 310deg, #f9e04c);
}

/* file tabs */
.filetabs {
  display: flex;
  align-items: flex-end;
  height: 28px;
  padding: 0 0 3px 18px;
  border-bottom: 1px solid #222a35;
  background: linear-gradient(#222a35 25px, #3e4555 25px);
}

.filetabs a {
  width: 116px;
  height: 20px;
  padding: 3px 11px;
  background: #303846;
  border-radius: 8px 8px 0 0;
}

.filetabs a.active {
  display: flex;
  align-items: center;
  gap: 22px;
  background: #3e4555;
  color: #fff;
  font-weight: 700;
  padding: 0 9px;
}

.filetabs button {
  width: 17px;
  height: 15px;
  margin: 0 0 2px 6px;
  background: #303846;
  border-radius: 3px;
  font-size: 16px;
  line-height: 14px;
}

/* workspace */
.workspace {
  display: flex;
  flex: 1;
  min-height: 0;
}

.rail {
  width: 23px;
  padding: 3px 1px;
}

.rail button {
  display: grid;
  place-items: center;
  width: 20px;
  height: 21px;
  margin-bottom: 5px;
  background: #323a48;
}

.palette {
  display: flex;
  flex-direction: column;
  width: 280px;
  background: #3e4555;
  border-right: 2px solid #2b3140;
  font: 10px/14px "DejaVu Sans Condensed", "DejaVu Sans", sans-serif;
  color: #fff;
}

.palette-head {
  height: 20px;
  padding: 6px 5px;
  background: #2f3543;
}

.grip {
  display: block;
  width: 4px;
  height: 9px;
  background: repeating-linear-gradient(#969cab 0 1px, transparent 1px 2px);
}

.palette-body {
  display: flex;
  flex-direction: column;
  flex: 1;
  padding: 5px 9px 2px 10px;
}

.pickrow {
  display: flex;
  align-items: center;
  gap: 13px;
  padding-right: 7px;
  margin-bottom: 4px;
}

.pick {
  display: flex;
  align-items: center;
  flex: 1;
  height: 19px;
  padding: 0 5px 0 4px;
  background: #4f566e;
}

.palette-body > .pick {
  flex: none;
}

.pick select {
  flex: 1;
  width: 20px;
}

.properties {
  width: 100%;
  margin-top: 6px;
  border-spacing: 0;
  table-layout: fixed;
}

.c-fold { width: 16px; }
.c-label { width: 114px; }

.properties tr {
  height: 16px;
}

.properties .group {
  height: 15px;
  background: #2f3543;
  font-size: 11px;
}

.properties td, .properties th {
  padding: 0 0 0 4px;
  line-height: 14px;
  text-align: left;
  font-weight: 400;
  border-bottom: 1px solid #353b4a;
}

.properties th {
  color: #a0a6b5;
}

.properties td:first-child {
  background: #2f3543;
  border-bottom: 0;
}

.properties td:nth-child(3) {
  border-left: 1px solid #2c3240;
}

.properties .group th {
  color: #fff;
  font-weight: 700;
  border: 0;
}

.properties .readonly th {
  color: #fff;
  background: #454d60;
}

.properties .readonly td {
  color: #747b8b;
}

.fold {
  display: block;
  width: 8px;
  height: 8px;
  background: linear-gradient(#11151d, #11151d) center / 4px 1px no-repeat;
  border: 1px solid #11151d;
}

.empty {
  flex: 1;
  width: 131px;
  margin-bottom: 6px;
  border-right: 1px solid #2c3240;
}

.hint {
  height: 50px;
  margin: 0 1px;
  border: 1px solid #a7adba;
}

.drawing {
  display: flex;
  flex-direction: column;
  flex: 1;
  min-width: 0;
}

.canvas {
  position: relative;
  flex: 1;
  background: #fff;
}

.viewlabel {
  padding: 6px 3px;
  color: #111;
  font: 11px/14px "DejaVu Sans Condensed", "DejaVu Sans", sans-serif;
}

.ucs {
  position: absolute;
  left: 12px;
  bottom: 4px;
  width: 90px;
  height: 90px;
}

.ucs text {
  font: 300 18px "Open Sans", sans-serif;
  fill: #111;
}

.command {
  display: flex;
  height: 55px;
  background: #fff;
  border-top: 3px solid #16181d;
  color: #111;
  font: 11px/14px "DejaVu Sans Mono", monospace;
}

.cmdbar {
  display: flex;
  flex-direction: column;
  align-items: center;
  justify-content: space-between;
  width: 23px;
  padding: 4px 2px 4px 0;
  background: #2b3140;
  color: #fff;
}

.cmdbar .i8 {
  margin-bottom: 6px;
}

.dots {
  width: 17px;
  height: 5px;
  background: linear-gradient(transparent 2px, #2b3140 2px 3px, transparent 3px), repeating-linear-gradient(90deg, #dfe2e8 0 1px, transparent 1px 2px);
}

.cmdlog {
  flex: 1;
  overflow: hidden;
}

.history {
  height: 40px;
  padding: 10px 2px 0;
  border-bottom: 1px solid #111;
}

.cmdline {
  display: flex;
  align-items: center;
  gap: 2px;
  height: 20px;
  padding-left: 3px;
}

.cmdline .tri {
  border-top-color: #555;
  border-width: 4px 3px 0;
}

.cmdline input {
  flex: 1;
  padding-left: 6px;
  font-style: italic;
}

.cmdline input::placeholder {
  color: #666;
}

/* LINEAR palette */
.linear {
  display: flex;
  flex-direction: column;
  width: 223px;
  background: #50566e;
  border-left: 1px solid #222a35;
}

.linear-head {
  display: flex;
  align-items: center;
  gap: 3px;
  height: 30px;
  padding-left: 9px;
  background: #222a35;
}

.linear-tabs {
  display: grid;
  grid-template-columns: repeat(5, 1fr);
  height: 31px;
  background: #222a35;
}

.linear-tabs a {
  display: grid;
  place-items: center;
}

.linear-tabs .active {
  background: #50566e;
  border-top: 1px solid #c9ccd4;
}

.linear-body {
  display: flex;
  flex-direction: column;
  flex: 1;
  padding: 5px 11px 0;
}

.linear h3 {
  margin: 0 0 4px;
  font-size: 11px;
  font-weight: 400;
}

.tree {
  flex: 1;
  padding: 1px 6px;
  background: #353c4a;
}

.node {
  display: flex;
  align-items: center;
  gap: 3px;
  height: 22px;
  padding-right: 2px;
  color: #fff;
}

.node .tri {
  margin-left: auto;
}

.node.current {
  background: linear-gradient(90deg, #2b303d 172px, transparent 172px);
}

.tree ul {
  margin: 0;
  padding: 2px 1px 2px 16px;
  list-style: none;
  background: #3d4353;
  color: #eceef2;
  font: 10px/16px "DejaVu Sans Condensed", "DejaVu Sans", sans-serif;
}

.tree li {
  height: 16px;
  padding-left: 2px;
  white-space: nowrap;
}

.tree li:nth-child(4n) {
  height: 15px;
}

.tree .sel {
  background: #50586f;
}

.tree .type {
  margin-left: -13px;
}

.tree .floors {
  height: 82px;
}

.linear-foot {
  display: flex;
  align-items: center;
  gap: 7px;
  height: 23px;
  padding-top: 6px;
}

.spacer {
  flex: 1;
}

.linear-foot b {
  width: 15px;
  height: 15px;
  background: #fff;
  border-radius: 50%;
  color: #3e4555;
  line-height: 15px;
  text-align: center;
}

/* player */
.player {
  display: flex;
  align-items: center;
  height: 52px;
  padding: 0 14px 0 5px;
  background: #fff;
  color: #222;
}

.play svg {
  width: 42px;
  height: 42px;
}

.time {
  width: 76px;
  margin-left: 19px;
  font-size: 10px;
}

.player input {
  appearance: none;
  flex: 1;
  height: 4px;
  background: linear-gradient(90deg, #1b3d47 82%, #d6d6d6 82%);
}

.player input::-webkit-slider-thumb {
  appearance: none;
  width: 13px;
  height: 13px;
  border-radius: 50%;
  background: #1b3d47;
}

.controls {
  display: flex;
  align-items: center;
  gap: 21px;
  padding-left: 99px;
}

/* dialog */
.dialog {
  position: absolute;
  top: 337px;
  left: 50%;
  width: 562px;
  margin-left: -281px;
  background: #f2f0f4;
  border: 1px solid #666;
  box-shadow: 0 3px 12px rgba(0, 0, 0, .35);
  color: #111;
  font-size: 10px;
  line-height: 13px;
}

.dialog-title {
  display: flex;
  align-items: center;
  gap: 5px;
  height: 27px;
  padding: 0 15px 0 8px;
  background: #fff;
  font-size: 11px;
}

.dialog-title span {
  flex: 1;
}

.dialog-title button + button {
  margin-left: 27px;
}

.dialog-title button {
  font-size: 12px;
}

.grid {
  display: flex;
  margin: 9px 11px 0;
}

.spools {
  flex: 1;
  border-spacing: 0;
  table-layout: fixed;
  border-top: 1px solid #8d8d8d;
}

.c-no { width: 22px; }
.c-width { width: 90px; }
.c-color { width: 143px; }
.c-short { width: 89px; }

.spools th, .spools td {
  padding: 0 0 0 2px;
  text-align: left;
  font-weight: 400;
  border-right: 1px solid #999;
  border-bottom: 1px solid #999;
}

.spools thead th {
  height: 31px;
  line-height: 13px;
}

.spools thead th:first-child, .spools tbody th {
  border-left: 1px solid #999;
}

.spools tbody tr {
  height: 17px;
}

.spools tbody tr:nth-child(3n) {
  height: 16px;
}

.spools tbody th {
  padding-right: 5px;
  text-align: right;
}

.spools tbody td {
  background: #fff;
  padding-left: 1px;
}

.spools tbody td > div {
  display: flex;
  align-items: center;
  height: 14px;
}

.spools .lw div {
  padding-left: 1px;
}

.spools select {
  flex: 1;
}

.lw .caret {
  width: 8px;
  height: 14px;
  border: 0;
  background: linear-gradient(#333, #333) 50% 6px / 4px 1px no-repeat, linear-gradient(#333, #333) 50% 7px / 2px 1px no-repeat, #dedce0;
}

.swatch {
  width: 12px;
  height: 12px;
  margin: 0 3px 0 1px;
  border: 1px solid #111;
}

.name {
  flex: 1;
}

.spools .sel th {
  background: #9a9a9c;
}

.sel .name, .sel .short div {
  background: #000;
  color: #fff;
}

.spools .sel .color, .spools .sel .short {
  padding-right: 1px;
}

.spools tbody .rest:last-child {
  height: 11px;
}

.spools tbody .rest th, .spools tbody .rest td {
  border-bottom: 0;
  background: none;
}

.scroll {
  display: flex;
  flex-direction: column;
  align-items: center;
  width: 15px;
  padding: 32px 0 0;
  border-top: 1px solid #8d8d8d;
}

.scroll span {
  flex: 1;
  width: 12px;
  background: #cdcbcf;
}

.chev {
  width: 6px;
  height: 6px;
  margin: 6px 0 3px;
  border: solid #333;
  border-width: 1px 0 0 1px;
  transform: rotate(45deg);
}

.chev.down {
  margin: 4px 0 5px;
  transform: rotate(225deg);
}

.keys {
  display: flex;
  justify-content: flex-end;
  gap: 8px;
  margin: 4px 12px 10px;
}

.buttons {
  display: flex;
  justify-content: flex-end;
  gap: 5px;
  padding: 0 10px 7px;
}

.buttons button {
  width: 67px;
  height: 20px;
  background: #e3e1e5;
  border: 1px solid #adadad;
}

.buttons .default {
  border: 2px solid #1b64b0;
}

.resize {
  position: absolute;
  right: 0;
  bottom: 0;
  width: 10px;
  height: 10px;
}

.pointer {
  position: absolute;
  top: 91px;
  left: 435px;
  width: 16px;
  height: 22px;
}
```
